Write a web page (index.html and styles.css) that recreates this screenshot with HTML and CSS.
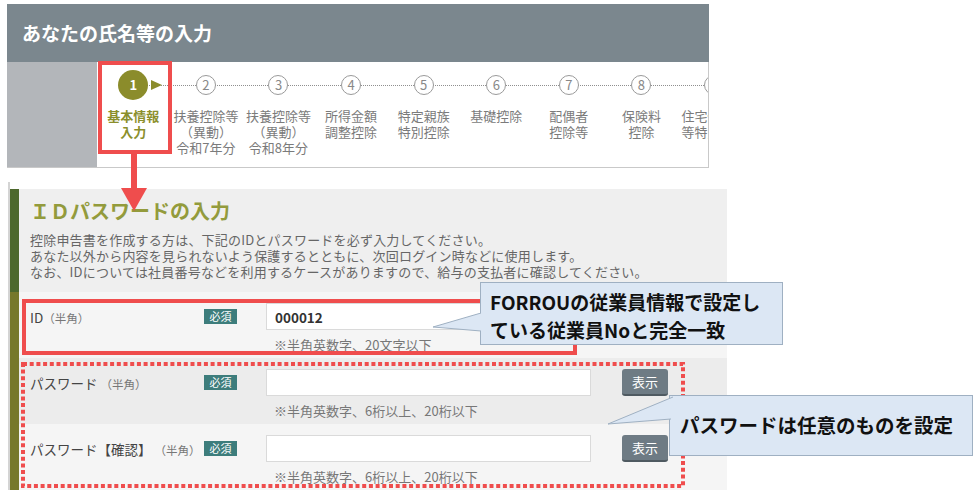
FILE: index.html
```html
<!DOCTYPE html>
<html lang="ja">
<head>
  <meta charset="utf-8">
  <title>IDパスワードの入力</title>
  <link rel="stylesheet" href="styles.css">
</head>
<body>
<div class="page">

  <section class="shot-top">
    <h1 class="top-title">あなたの氏名等の入力</h1>
    <div class="stepper">
      <div class="stepper-side"></div>
      <ol class="steps">
        <li class="step current"><span class="node"><span class="num">1</span></span><span class="label">基本情報<br>入力</span></li>
        <li class="step"><span class="node"><span class="num">2</span></span><span class="label">扶養控除等<br>（異動）<br>令和7年分</span></li>
        <li class="step"><span class="node"><span class="num">3</span></span><span class="label">扶養控除等<br>（異動）<br>令和8年分</span></li>
        <li class="step"><span class="node"><span class="num">4</span></span><span class="label">所得金額<br>調整控除</span></li>
        <li class="step"><span class="node"><span class="num">5</span></span><span class="label">特定親族<br>特別控除</span></li>
        <li class="step"><span class="node"><span class="num">6</span></span><span class="label">基礎控除</span></li>
        <li class="step"><span class="node"><span class="num">7</span></span><span class="label">配偶者<br>控除等</span></li>
        <li class="step"><span class="node"><span class="num">8</span></span><span class="label">保険料<br>控除</span></li>
        <li class="step"><span class="node"><span class="num">9</span></span><span class="label">住宅借入金<br>等特別控除</span></li>
      </ol>
    </div>
  </section>

  <section class="shot-bottom">
    <div class="intro">
      <h2>ＩＤパスワードの入力</h2>
      <p>控除申告書を作成する方は、下記のIDとパスワードを必ず入力してください。<br>
      あなた以外から内容を見られないよう保護するとともに、次回ログイン時などに使用します。<br>
      なお、IDについては社員番号などを利用するケースがありますので、給与の支払者に確認してください。</p>
    </div>

    <div class="form">
      <div class="row">
        <label class="field-label">ID<small>（半角）</small></label>
        <span class="badge">必須</span>
        <input class="text-input" type="text" value="000012">
        <span class="hint">※半角英数字、20文字以下</span>
      </div>
      <div class="row alt">
        <label class="field-label">パスワード <small>（半角）</small></label>
        <span class="badge">必須</span>
        <input class="text-input" type="password">
        <button class="show-btn">表示</button>
        <span class="hint">※半角英数字、6桁以上、20桁以下</span>
      </div>
      <div class="row">
        <label class="field-label">パスワード【確認】 <small>（半角）</small></label>
        <span class="badge">必須</span>
        <input class="text-input" type="password">
        <button class="show-btn">表示</button>
        <span class="hint">※半角英数字、6桁以上、20桁以下</span>
      </div>
    </div>
  </section>

  <!-- annotations -->
  <div class="mark-step"></div>
  <svg class="mark-arrow" width="32" height="62" viewBox="0 0 32 62">
    <line x1="16" y1="0" x2="16" y2="40" stroke="#ef4d4d" stroke-width="6"/>
    <polygon points="3,36 29,36 16,59" fill="#ef4d4d"/>
  </svg>
  <div class="mark-id"></div>
  <svg class="mark-pw" width="664" height="126" viewBox="0 0 664 126">
    <rect x="2" y="2" width="660" height="122" fill="none" stroke="#ef4d4d" stroke-width="4" stroke-dasharray="4 2.7"/>
  </svg>

  <div class="callout callout-id">
    <svg class="tail" width="50" height="22" viewBox="0 0 50 22">
      <polygon points="0,14 48,0 48,18" fill="#dce7f4"/>
      <polyline points="48,0 0,14 48,18" fill="none" stroke="#9fb0c2" stroke-width="1"/>
    </svg>
    FORROUの従業員情報で設定し<br>ている従業員Noと完全一致
  </div>
  <div class="callout callout-pw">
    <svg class="tail" width="66" height="30" viewBox="0 0 66 30">
      <polygon points="0,28 65,1 63,23" fill="#dce7f4"/>
      <polyline points="65,1 0,28 63,23" fill="none" stroke="#9fb0c2" stroke-width="1"/>
    </svg>
    パスワードは任意のものを設定
  </div>

</div>
</body>
</html>
```

FILE: styles.css
```css
body {
  margin: 0;
  background: #fff;
  font-family: "Noto Sans CJK JP", "Noto Sans", sans-serif;
}
.page {
  position: relative;
  width: 979px;
  height: 496px;
  overflow: hidden;
  padding-top: 4px;
  box-sizing: border-box;
}

/* top screenshot */
.shot-top {
  margin-left: 7px;
  width: 702px;
}
.top-title {
  margin: 0;
  height: 58px;
  line-height: 58px;
  padding-left: 15px;
  background: #7b878e;
  color: #fff;
  font-size: 19px;
  font-weight: bold;
}
.stepper {
  display: flex;
  height: 106px;
  border-right: 1px solid #c9c9c9;
  border-bottom: 1px solid #c9c9c9;
  box-sizing: border-box;
}
.stepper-side {
  width: 90px;
  background: #b3b6ba;
}
.steps {
  flex: 1;
  display: flex;
  margin: 0;
  padding: 0;
  list-style: none;
  background: #fff;
  overflow: hidden;
}
.step {
  flex: 0 0 72.6px;
  position: relative;
  display: flex;
  flex-direction: column;
  align-items: center;
  text-align: center;
}
.step::after {
  content: "";
  position: absolute;
  left: 50%;
  top: 23px;
  width: 100%;
  border-top: 1px dotted #8f8f8f;
}
.node {
  height: 46px;
  display: flex;
  align-items: center;
  justify-content: center;
}
.num {
  position: relative;
  z-index: 1;
  width: 18px;
  height: 18px;
  border: 1.3px solid #9a9a9a;
  border-radius: 50%;
  background: #fff;
  color: #888;
  font-size: 13px;
  line-height: 18px;
  text-align: center;
}
.current .num {
  width: 30px;
  height: 30px;
  border: none;
  background: #8b8c2b;
  color: #fff;
  font-weight: bold;
  line-height: 30px;
}
.current .num::after {
  content: "";
  position: absolute;
  left: 33px;
  top: 10px;
  border-left: 11px solid #8b8c2b;
  border-top: 5px solid transparent;
  border-bottom: 5px solid transparent;
}
.label {
  font-size: 13px;
  line-height: 16px;
  color: #7b7b7b;
  white-space: nowrap;
}
.current .label {
  color: #8b8f2c;
  font-weight: bold;
}

/* bottom screenshot */
.shot-bottom {
  margin: 14px 0 0 8px;
  width: 719px;
  border-left: 2px solid #d4d4d4;
  padding-top: 7px;
  box-sizing: border-box;
}
.intro {
  border-left: 9px solid #4c682c;
  background: #efefef;
  padding: 10px 0 12px 11px;
}
.intro h2 {
  margin: 0;
  font-size: 20px;
  line-height: 24px;
  color: #939b3c;
  font-weight: bold;
}
.intro p {
  margin: 9px 0 0;
  font-size: 13px;
  line-height: 16px;
  letter-spacing: 0.2px;
  color: #666;
}
.form {
  border-left: 9px solid #76782a;
}
.row {
  display: grid;
  grid-template-columns: 174px 62px 325px 31px 46px;
  grid-template-rows: 27px 16px;
  row-gap: 7px;
  height: 66px;
  box-sizing: border-box;
  padding: 11px 0 0 11px;
  background: #f5f5f5;
}
.row.alt {
  background: #ececec;
}
.field-label {
  align-self: center;
  font-size: 13.5px;
  color: #444;
  white-space: nowrap;
}
.field-label small {
  font-size: 11.5px;
  color: #777;
}
.badge {
  align-self: center;
  justify-self: start;
  width: 33px;
  height: 15px;
  line-height: 15px;
  text-align: center;
  background: #3d7d7c;
  color: #fff;
  font-size: 11px;
}
.text-input {
  grid-column: 3;
  height: 27px;
  margin: 0;
  padding: 0 8px;
  box-sizing: border-box;
  border: 1px solid #dadada;
  background: #fff;
  font-family: inherit;
  font-size: 13.5px;
  font-weight: bold;
  color: #333;
}
.show-btn {
  grid-column: 5;
  height: 27px;
  padding: 0;
  border: none;
  border-bottom: 2px solid #4f5a61;
  border-radius: 3px;
  background: #6e7b84;
  color: #fff;
  font-family: inherit;
  font-size: 13px;
}
.hint {
  grid-row: 2;
  grid-column: 3 / span 3;
  padding-left: 8px;
  font-size: 13px;
  line-height: 16px;
  color: #777;
}

/* annotation overlays */
.mark-step {
  position: absolute;
  left: 98px;
  top: 61px;
  width: 74px;
  height: 93px;
  border: 4px solid #ef4d4d;
  box-sizing: border-box;
}
.mark-arrow {
  position: absolute;
  left: 118px;
  top: 152px;
}
.mark-id {
  position: absolute;
  left: 22px;
  top: 299px;
  width: 555px;
  height: 56px;
  border: 4px solid #ef4d4d;
  box-sizing: border-box;
}
.mark-pw {
  position: absolute;
  left: 21px;
  top: 362px;
}
.callout {
  position: absolute;
  box-sizing: border-box;
  background: #dce7f4;
  border: 1px solid #9fb0c2;
  color: #111;
  font-weight: bold;
  font-size: 19px;
  line-height: 28px;
}
.callout .tail {
  position: absolute;
}
.callout-id {
  left: 480px;
  top: 282px;
  width: 303px;
  height: 63px;
  padding: 5px 0 0 9px;
}
.callout-id .tail {
  left: -48px;
  top: 30px;
}
.callout-pw {
  left: 669px;
  top: 395px;
  width: 304px;
  height: 61px;
  padding: 15px 0 0 10px;
  font-size: 19.5px;
}
.callout-pw .tail {
  left: -62px;
  top: 0px;
}
```
